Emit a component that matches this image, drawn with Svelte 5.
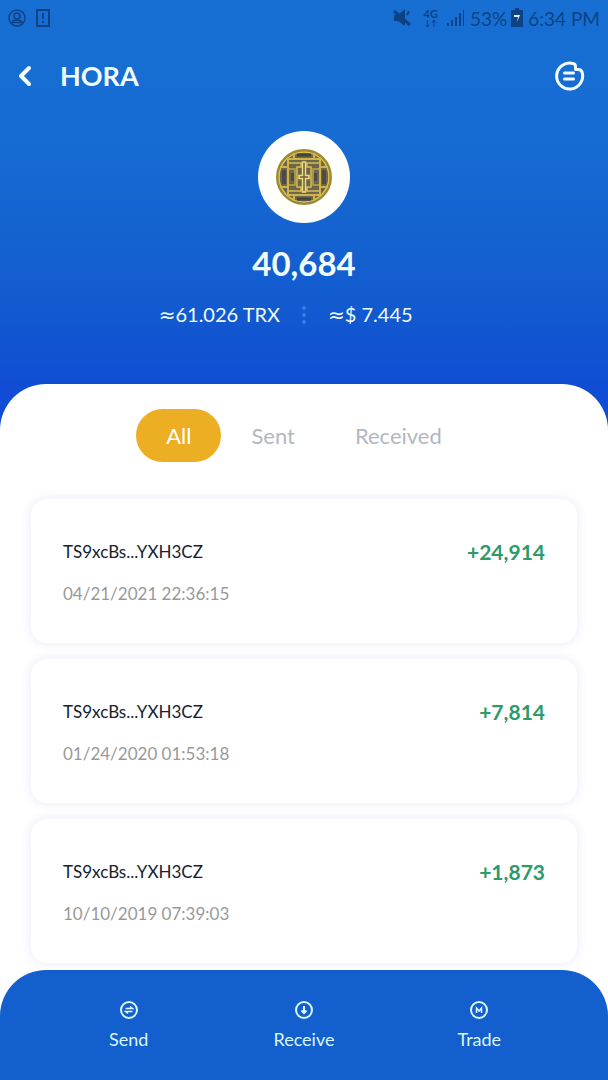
<script>
  const tabs = ['All', 'Sent', 'Received']
  let active = $state('All')

  const transfers = [
    { address: 'TS9xcBs...YXH3CZ', time: '04/21/2021 22:36:15', amount: '+24,914' },
    { address: 'TS9xcBs...YXH3CZ', time: '01/24/2020 01:53:18', amount: '+7,814' },
    { address: 'TS9xcBs...YXH3CZ', time: '10/10/2019 07:39:03', amount: '+1,873' },
  ]
</script>

<div class="app">
  <header>
    <div class="status">
      <svg width="20" height="20" viewBox="0 0 20 20" fill="none" stroke="currentColor" stroke-width="1.500">
        <circle cx="9" cy="10" r="8" />
        <circle cx="9" cy="8" r="3" />
        <path d="M4 14.500c1-3.500 9-3.500 10 0z" />
      </svg>
      <svg class="note" width="16" height="20" viewBox="0 0 16 20" fill="none" stroke="currentColor" stroke-width="2">
        <path d="M2 2h12v16H2z" />
        <path d="M8 5v6M8 13v2" />
      </svg>
      <span class="spacer"></span>
      <svg width="20" height="20" viewBox="0 0 20 20" fill="currentColor">
        <path d="M2 7h4l7-6v17l-7-5H2z" />
        <path d="M2 3l16 14" stroke="currentColor" stroke-width="3" />
        <path d="M15 7l2-4" stroke="currentColor" stroke-width="2" />
      </svg>
      <span class="network">4G<small>↓↑</small></span>
      <svg width="20" height="18" viewBox="0 0 20 18" fill="currentColor">
        <path d="M1 14h2v3H1zM5 11h2v6H5zM9 8h2v9H9zM13 4h2v13h-2zM17 1h1v16h-1z" />
      </svg>
      <span class="percent">53%</span>
      <svg width="12" height="20" viewBox="0 0 12 20">
        <path d="M4 0h4v2h4v17H0V2h4z" fill="currentColor" />
        <path d="M3 7h6l-3 7 1-5H3z" fill="#d8efff" />
      </svg>
      <span class="clock">6:34 PM</span>
    </div>

    <div class="title">
      <button class="icon" aria-label="Back">
        <svg width="16" height="24" viewBox="0 0 16 24" fill="none" stroke="currentColor" stroke-width="4" stroke-linecap="round" stroke-linejoin="round">
          <path d="M12 4L4 12l8 8" />
        </svg>
      </button>
      <h1>HORA</h1>
      <button class="icon" aria-label="Token details">
        <svg width="32" height="32" viewBox="0 0 32 32" fill="none" stroke="currentColor" stroke-width="3" stroke-linecap="round" stroke-linejoin="round">
          <path d="M20 3.500A13 13 0 1 0 29 12c-1-2-2-2.500-3.500-2.500H22.500V6.500Q22.500 4 20 3.500z" />
          <path d="M11.500 13h9M11.500 19h9" />
        </svg>
      </button>
    </div>

    <div class="logo">
      <svg width="56" height="56" viewBox="0 0 56 56" fill="none">
        <circle cx="28" cy="28" r="27" fill="#6c664f" stroke="#a08a2e" stroke-width="2" />
        <circle cx="28" cy="28" r="25" stroke="#dcc453" stroke-width="1.500" />
        <path d="M21 6h14M21 50h14" stroke="#46433a" stroke-width="3" />
        <path d="M12 8v40M44 8v40M11 10h34M11 46h34M18 4v6M38 4v6M18 46v6M38 46v6M4 18h8M44 18h8M4 38h8M44 38h8" stroke="#cfb548" stroke-width="2" />
        <path d="M8 21v14M48 21v14M17 24v8M39 24v8" stroke="#4f4b43" stroke-width="4" />
        <path d="M13 14h12v4h-4v20h4v4H13M43 14H31v4h4v20h-4v4h12" stroke="#d8bf51" stroke-width="1.500" />
        <path d="M13 20h6v16h-6M43 20h-6v16h6" stroke="#c0a741" stroke-width="1.500" />
        <path d="M26.500 13v13.500H23v3h3.500V43h3V29.500H33v-3h-3.500V13z" fill="#6e6144" stroke="#f0dc78" stroke-width="1.500" />
      </svg>
    </div>

    <div class="balance">40,684</div>
    <div class="worth">
      <span><b>≈</b>61.026 TRX</span>
      <i class="dots"></i>
      <span><b>≈</b>$ 7.445</span>
    </div>
  </header>

  <main>
    <div class="tabs">
      {#each tabs as tab}
        <button class:active={tab === active} onclick={() => (active = tab)}>{tab}</button>
      {/each}
    </div>

    <ul>
      {#each transfers as t}
        <li>
          <div class="row">
            <span class="address">{t.address}</span>
            <span class="amount">{t.amount}</span>
          </div>
          <time>{t.time}</time>
        </li>
      {/each}
    </ul>
  </main>

  <nav>
    <button>
      <svg width="20" height="20" viewBox="0 0 20 20" fill="none" stroke="currentColor" stroke-width="2">
        <circle cx="10" cy="10" r="8" />
        <path d="M6.500 8.500h7L11 6.500M13.500 11.500h-7L9 13.500" stroke-width="1.500" />
      </svg>
      Send
    </button>
    <button>
      <svg width="20" height="20" viewBox="0 0 20 20" fill="none" stroke="currentColor" stroke-width="2">
        <circle cx="10" cy="10" r="8" />
        <path d="M10 6v7M7.500 10.500l2.500 2.500 2.500-2.500" />
      </svg>
      Receive
    </button>
    <button>
      <svg width="20" height="20" viewBox="0 0 20 20" fill="none" stroke="currentColor" stroke-width="2">
        <circle cx="10" cy="10" r="8" />
        <path d="M7.500 13V8l2.500 3 2.500-3v5" stroke-width="1.500" />
      </svg>
      Trade
    </button>
  </nav>
</div>

<style>
  :global(body) { margin: 0; background: #fff; }
  .app { display: flex; flex-direction: column; min-height: 100vh; font-family: Lato, sans-serif; }
  button { border: 0; padding: 0; background: none; color: inherit; font: inherit; cursor: pointer; }
  svg { display: block; flex: none; }

  header { padding-bottom: 102px; color: #f1fcff; background: linear-gradient(#176fd2, #166bd2 35%, #125acf 72%, #104cd4 90%); }
  .status { display: flex; align-items: center; height: 36px; padding: 0 8px; color: #0d4384; font-size: 19px; }
  .note { margin-left: 7px; }
  .spacer { flex: 1; }
  .network { display: flex; flex-direction: column; align-items: center; margin: 0 8px 0 12px; font-size: 11px; font-weight: 700; line-height: 10px; }
  .network small { font-size: 8px; line-height: 8px; }
  .percent { margin: 0 4px; }
  .clock { margin-left: 5px; }

  .title { display: flex; align-items: center; height: 80px; padding: 0 23px 0 17px; }
  .icon { display: flex; }
  h1 { flex: 1; margin: 0 0 0 27px; font-size: 27px; font-weight: 700; line-height: 40px; }

  .logo { display: flex; align-items: center; justify-content: center; width: 92px; height: 92px; margin: 15px auto 0; border-radius: 50%; background: #fffffb; }
  .balance { margin-top: 20px; font-size: 33px; font-weight: 700; line-height: 40px; text-align: center; }
  .worth { display: grid; grid-template-columns: 1fr auto 1fr; align-items: center; gap: 22px; margin-top: 18px; font-size: 20px; line-height: 26px; }
  .worth span:first-child { text-align: right; }
  .worth b { font-family: "DejaVu Sans", sans-serif; font-weight: 400; }
  .dots { height: 18px; border-left: 4px dotted #3a7be4; }

  main { flex: 1; margin-top: -46px; padding: 25px 31px 5px; border-radius: 46px 46px 0 0; background: #fff; }
  .tabs { display: flex; justify-content: center; }
  .tabs button { height: 53px; padding: 0 30px; border-radius: 27px; color: #b3b7c0; font-size: 22px; }
  .tabs .active { background: #ecae22; color: #fff; }

  ul { display: grid; gap: 16px; margin: 37px 0 0; padding: 0; list-style: none; }
  li { padding: 37px 32px; border-radius: 16px; background: #fff; box-shadow: 0 0 12px #e9e9f6; }
  .row { display: flex; align-items: center; justify-content: space-between; line-height: 32px; }
  .address { color: #14232e; font-size: 17px; }
  .amount { color: #2c9a6b; font-size: 21px; font-weight: 700; }
  time { display: block; margin-top: 14px; color: #999; font-size: 17px; line-height: 24px; }

  nav { position: relative; display: grid; grid-template-columns: repeat(3, 1fr); height: 110px; padding: 0 41px; border-radius: 46px 46px 0 0; background: #135fce; color: #d9f7ff; font-size: 18px; box-sizing: border-box; }
  nav button { display: flex; flex-direction: column; align-items: center; gap: 7px; padding-top: 30px; line-height: 24px; }
</style>
